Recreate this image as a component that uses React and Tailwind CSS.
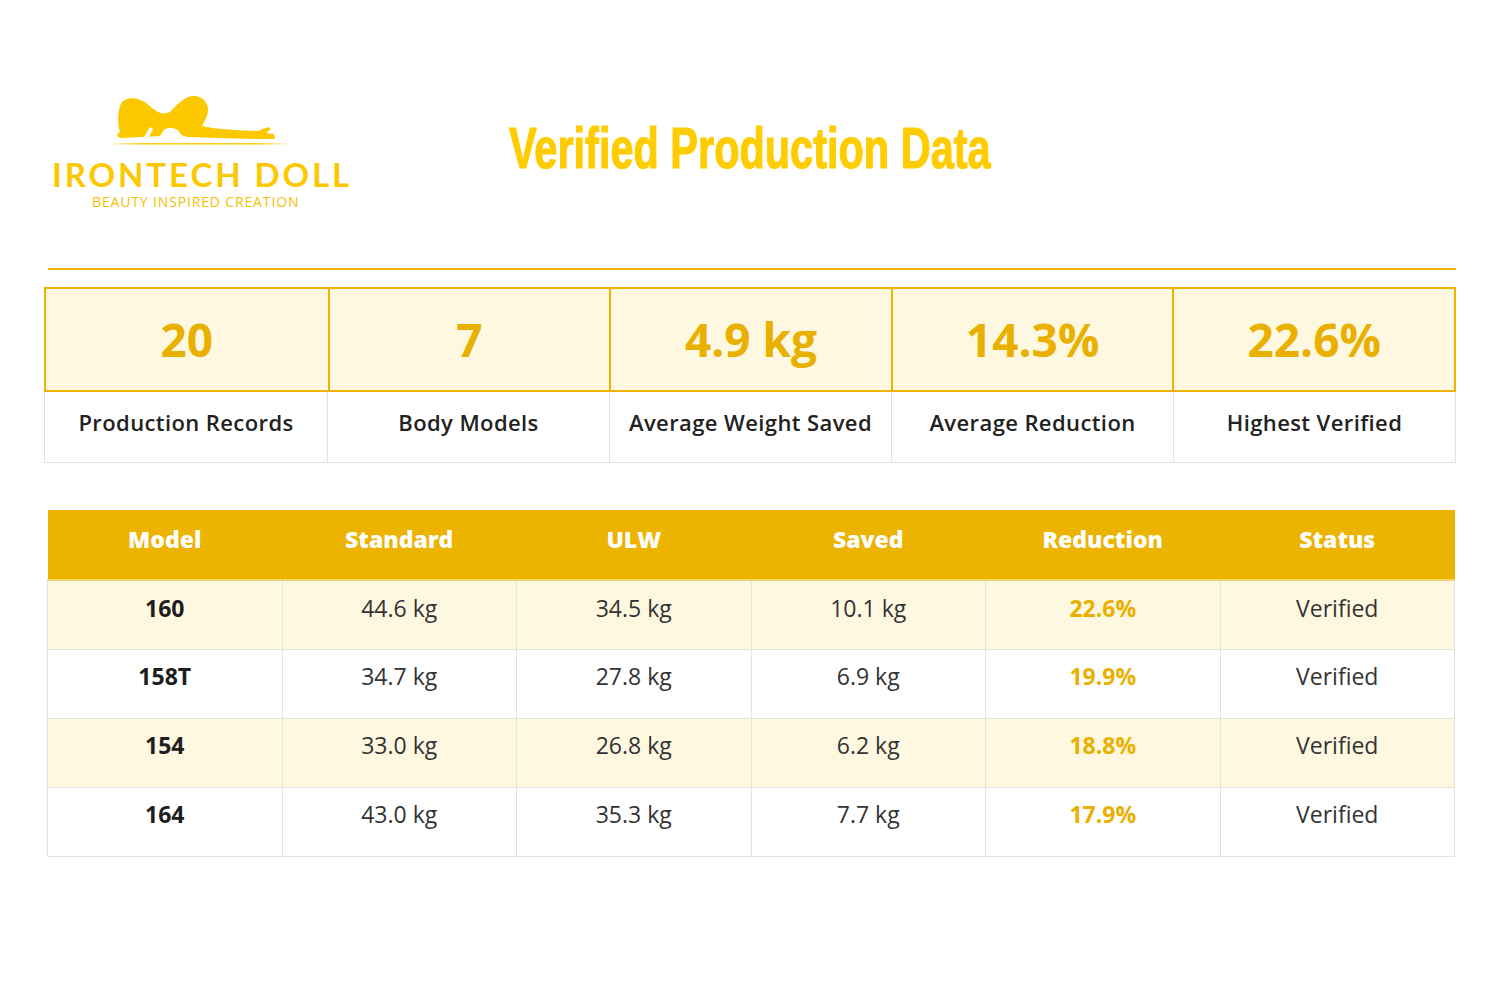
const STATS = [
  { value: '20', label: 'Production Records' },
  { value: '7', label: 'Body Models' },
  { value: '4.9 kg', label: 'Average Weight Saved' },
  { value: '14.3%', label: 'Average Reduction' },
  { value: '22.6%', label: 'Highest Verified' },
];

const COLUMNS = ['Model', 'Standard', 'ULW', 'Saved', 'Reduction', 'Status'];

const ROWS = [
  { model: '160', standard: '44.6 kg', ulw: '34.5 kg', saved: '10.1 kg', reduction: '22.6%' },
  { model: '158T', standard: '34.7 kg', ulw: '27.8 kg', saved: '6.9 kg', reduction: '19.9%' },
  { model: '154', standard: '33.0 kg', ulw: '26.8 kg', saved: '6.2 kg', reduction: '18.8%' },
  { model: '164', standard: '43.0 kg', ulw: '35.3 kg', saved: '7.7 kg', reduction: '17.9%' },
];

function Logo() {
  return (
    <div className="flex w-[310px] flex-col items-start">
      <svg width="200" height="62" viewBox="0 0 200 62" className="ml-[54px]">
        <defs>
          <linearGradient id="floor" x1="0" x2="1" y1="0" y2="0">
            <stop offset="0" stopColor="#fcc800" stopOpacity="0" />
            <stop offset="0.2" stopColor="#fcc800" stopOpacity="0.9" />
            <stop offset="0.8" stopColor="#fcc800" stopOpacity="0.9" />
            <stop offset="1" stopColor="#fcc800" stopOpacity="0" />
          </linearGradient>
        </defs>
        {/* silhouette, rough */}
        <path
          fill="#fcc800"
          d="M22,16 C24,9 32,7 40,9 C46,11 50,14 54,18 C60,23 66,25 72,22 C78,16 84,8 94,6 C104,5 110,12 110,20 C110,26 106,32 104,36 C112,38 124,39 136,40 L160,41 L170,37 L173,39 L168,43 L176,44 L177,49 L160,49 L120,48 L92,47 C86,47 82,45 80,40 C76,38 70,37 66,40 L62,46 L24,48 C18,48 18,44 22,42 C20,36 19,26 22,16 Z"
        />
        <path fill="#fff" d="M46,47 L52,37 L55,39 L51,47 Z" />
        <rect x="8" y="53" width="186" height="1.6" fill="url(#floor)" />
      </svg>
      <div className="ml-[8px] mt-[5px] text-[33px] font-bold leading-[34px] tracking-[2.9px] text-[#fcc800] [font-family:Lato,'Noto_Sans',sans-serif]">
        IRONTECH DOLL
      </div>
      <div className="ml-[48px] mt-[3px] text-[14px] leading-[16px] tracking-[0.85px] text-[#f3bf00] [font-family:'Open_Sans',sans-serif]">
        BEAUTY INSPIRED CREATION
      </div>
    </div>
  );
}

export default function App() {
  return (
    <div className="min-h-[1000px] w-[1500px] bg-white px-[44px] pt-[90px] [font-family:'Open_Sans',sans-serif]">
      <header className="grid grid-cols-[1fr_auto_1fr] items-start">
        <div>
          <Logo />
        </div>
        <h1 className="mt-[26px] origin-center scale-x-[0.715] text-[58px] font-bold leading-[64px] text-[#ffcc00] [-webkit-text-stroke:1.2px_#ffcc00] [font-family:'Liberation_Sans_Narrow','Liberation_Sans',sans-serif]">
          Verified Production Data
        </h1>
        <div />
      </header>

      <div className="ml-[4px] mt-[58px] h-[2px] bg-[#f0b400]" />

      <section className="mt-[17px]">
        <div className="grid grid-cols-5 border-2 border-[#f0b400] bg-[#fff8e0]">
          {STATS.map((s, i) => (
            <div
              key={s.label}
              className={`flex h-[101px] items-center justify-center text-[46px] font-bold text-[#e9b000] ${i > 0 ? 'border-l-2 border-[#f0b400]' : ''}`}
            >
              {s.value}
            </div>
          ))}
        </div>
        <div className="grid grid-cols-5 border-x border-b border-[#e3e3e3]">
          {STATS.map((s, i) => (
            <div
              key={s.label}
              className={`flex h-[70px] items-center justify-center pb-[10px] text-[22px] font-semibold tracking-[0.4px] text-[#222] ${i > 0 ? 'border-l border-[#e3e3e3]' : ''}`}
            >
              {s.label}
            </div>
          ))}
        </div>
      </section>

      <table className="mx-[3px] mt-[47px] w-[1408px] table-fixed border-collapse text-[23px]">
        <thead>
          <tr className="h-[70px] border-b-2 border-[#f7d46a] bg-[#ecb300]">
            {COLUMNS.map((c) => (
              <th key={c} className="pb-[10px] text-center font-extrabold text-white">
                {c}
              </th>
            ))}
          </tr>
        </thead>
        <tbody>
          {ROWS.map((r, i) => (
            <tr key={r.model} className={`h-[69px] ${i % 2 === 0 ? 'bg-[#fff8e1]' : 'bg-white'}`}>
              <td className="border border-[#e3e3e3] pb-[14px] text-center font-bold text-[#1e1e1e]">{r.model}</td>
              <td className="border border-[#e3e3e3] pb-[14px] text-center text-[#333]">{r.standard}</td>
              <td className="border border-[#e3e3e3] pb-[14px] text-center text-[#333]">{r.ulw}</td>
              <td className="border border-[#e3e3e3] pb-[14px] text-center text-[#333]">{r.saved}</td>
              <td className="border border-[#e3e3e3] pb-[14px] text-center font-bold text-[#eab000]">{r.reduction}</td>
              <td className="border border-[#e3e3e3] pb-[14px] text-center text-[#333]">Verified</td>
            </tr>
          ))}
        </tbody>
      </table>
    </div>
  );
}
